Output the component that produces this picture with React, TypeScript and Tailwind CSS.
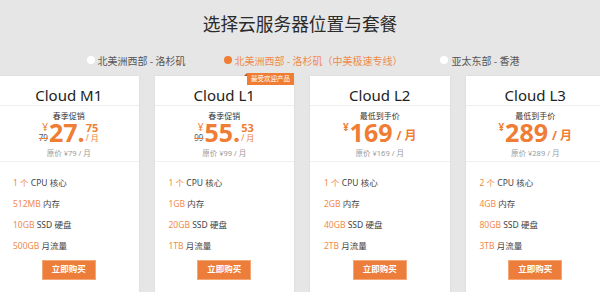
import React from "react";

const ORANGE = "text-[#ef7d33]";

type Plan = {
  name: string;
  label: string;
  price: string;
  cents?: string;
  was?: string;
  original: string;
  specs: [string, string][];
  hot?: boolean;
};

const plans: Plan[] = [
  {
    name: "Cloud M1",
    label: "春季促销",
    price: "27",
    cents: "75",
    was: "79",
    original: "原价 ¥79 / 月",
    specs: [
      ["1 个", " CPU 核心"],
      ["512MB", " 内存"],
      ["10GB", " SSD 硬盘"],
      ["500GB", " 月流量"],
    ],
  },
  {
    name: "Cloud L1",
    label: "春季促销",
    price: "55",
    cents: "53",
    was: "99",
    original: "原价 ¥99 / 月",
    hot: true,
    specs: [
      ["1 个", " CPU 核心"],
      ["1GB", " 内存"],
      ["20GB", " SSD 硬盘"],
      ["1TB", " 月流量"],
    ],
  },
  {
    name: "Cloud L2",
    label: "最低到手价",
    price: "169",
    original: "原价 ¥169 / 月",
    specs: [
      ["1 个", " CPU 核心"],
      ["2GB", " 内存"],
      ["40GB", " SSD 硬盘"],
      ["2TB", " 月流量"],
    ],
  },
  {
    name: "Cloud L3",
    label: "最低到手价",
    price: "289",
    original: "原价 ¥289 / 月",
    specs: [
      ["2 个", " CPU 核心"],
      ["4GB", " 内存"],
      ["80GB", " SSD 硬盘"],
      ["3TB", " 月流量"],
    ],
  },
];

const regions = [
  { label: "北美洲西部 - 洛杉矶", active: false },
  { label: "北美洲西部 - 洛杉矶（中美极速专线）", active: true },
  { label: "亚太东部 - 香港", active: false },
];

function Price({ plan }: { plan: Plan }) {
  if (plan.cents) {
    return (
      <div className={`mt-[2px] flex h-[20px] justify-center ${ORANGE}`}>
        <div className="flex flex-col items-end justify-between">
          <span className="text-[10px] leading-[10px]">¥</span>
          <span className="text-[8px] leading-[8px] text-[#555] line-through decoration-[#ef7d33]">
            {plan.was}
          </span>
        </div>
        <span className="ml-[1px] font-['Open_Sans'] text-[25px] font-bold leading-[20px]">
          {plan.price}.
        </span>
        <div className="ml-[1px] flex flex-col items-start justify-between">
          <span className="font-['Open_Sans'] text-[11px] font-bold leading-[11px]">
            {plan.cents}
          </span>
          <span className="text-[8px] leading-[8px]">/ 月</span>
        </div>
      </div>
    );
  }
  return (
    <div className={`mt-[2px] flex h-[20px] justify-center ${ORANGE}`}>
      <span className="self-start text-[10px] font-bold leading-[10px]">¥</span>
      <span className="ml-[1px] font-['Open_Sans'] text-[25px] font-bold leading-[20px]">
        {plan.price}
      </span>
      <span className="ml-[4px] self-end text-[12px] font-bold leading-[13px]">/ 月</span>
    </div>
  );
}

function Card({ plan }: { plan: Plan }) {
  return (
    <div className="relative flex w-[139.5px] shrink-0 flex-col bg-white shadow-[0_0_2px_rgba(0,0,0,0.08)]">
      {plan.hot && (
        <div className="absolute right-0 top-[-3px] flex h-[12px] w-[47px] items-center justify-center bg-[#ef7d33] text-[6.5px] leading-none text-white">
          最受欢迎产品
          <span className="absolute left-[-3px] top-0 h-0 w-0 border-b-[3px] border-l-[3px] border-b-[#b9561a] border-l-transparent" />
        </div>
      )}
      <div className="flex h-[30px] items-end justify-center border-b border-[#eeeeee] pb-[2px] font-['Noto_Sans'] text-[15px] leading-[15px] text-[#222]">
        {plan.name}
      </div>
      <div className="mt-[6px] text-center text-[8px] leading-[8px] text-[#333]">
        {plan.label}
      </div>
      <Price plan={plan} />
      <div className="mt-[7px] text-center text-[7.5px] leading-[8px] text-[#999]">
        {plan.original}
      </div>
      <div className="mt-[4px] border-b border-[#f0f0f0]" />
      <ul className="px-[14px] pt-[10px] text-[8.5px] leading-[21px] text-[#444]">
        {plan.specs.map(([num, rest]) => (
          <li key={rest}>
            <span className="text-[#f08a4b]">{num}</span>
            {rest}
          </li>
        ))}
      </ul>
      <button className="mx-auto mt-[3.5px] h-[20px] w-[54px] border border-[#f4a777] bg-[#ed7d3a] text-[8.5px] font-bold text-white">
        立即购买
      </button>
    </div>
  );
}

export default function App() {
  return (
    <div className="h-[292px] w-[600px] overflow-hidden bg-[#e6e6e6] font-['Noto_Sans','Noto_Sans_CJK_SC',sans-serif]">
      <h1 className="flex h-[46px] items-center justify-center font-['Noto_Sans_CJK_SC',sans-serif] text-[17.7px] text-[#2b2b2b]">
        选择云服务器位置与套餐
      </h1>
      <div className="flex h-[28px] items-center justify-center gap-[38px] pl-[6px] font-['Noto_Sans_CJK_SC',sans-serif] text-[10px]">
        {regions.map((r) => (
          <div
            key={r.label}
            className={`flex items-center gap-[3px] ${r.active ? "text-[#f08a4b]" : "text-[#555]"}`}
          >
            <span
              className={`h-[8px] w-[8px] rounded-full ${r.active ? "bg-[#ef7d33]" : "bg-white"}`}
            />
            {r.label}
          </div>
        ))}
      </div>
      <div className="ml-[-1px] mt-[2px] flex h-[300px] gap-[16px] font-['Noto_Sans','Noto_Sans_CJK_SC',sans-serif]">
        {plans.map((p) => (
          <Card key={p.name} plan={p} />
        ))}
      </div>
    </div>
  );
}
